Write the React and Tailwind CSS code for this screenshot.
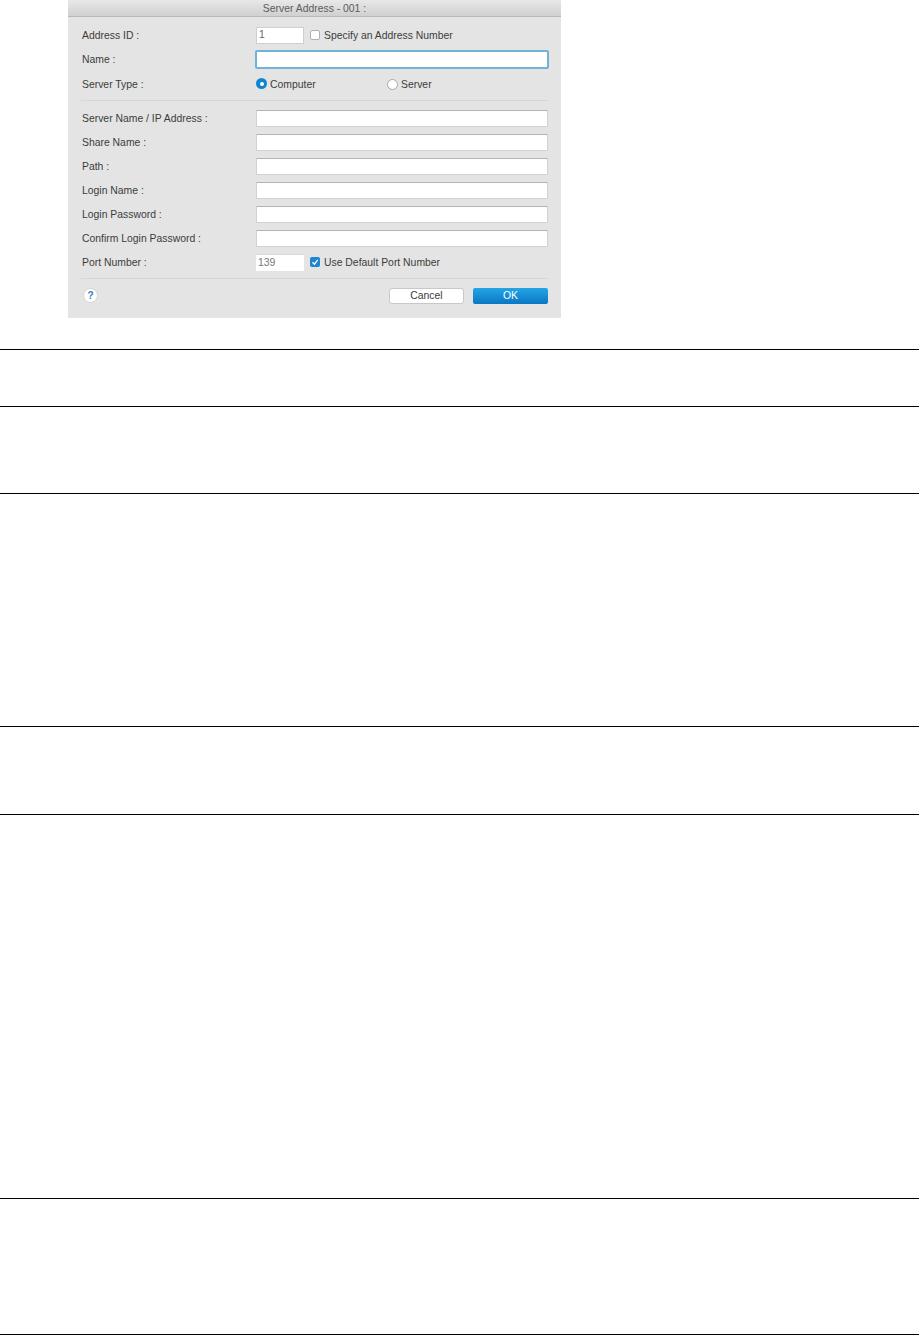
const field = 'h-[17px] bg-white border border-[#d2d2d2] border-t-[#b4b4b4] shrink-0';

function Row({ label, children, className = '' }) {
  return (
    <div className={`flex items-center h-[24px] ${className}`}>
      <div className="w-[188px] pl-[14px] pt-[1px] shrink-0">{label}</div>
      {children}
    </div>
  );
}

function CheckIcon() {
  return (
    <svg viewBox="0 0 10 10" className="w-[10px] h-[10px]">
      <path d="M2.5 5.2 L4.4 7.2 L7.8 2.8" fill="none" stroke="white" strokeWidth="1.3" />
    </svg>
  );
}

function Dialog() {
  return (
    <div className="ml-[68px] w-[493px] h-[318px] bg-[#e4e4e4] text-[10.4px] text-[#3c3c3c] font-['Liberation_Sans',sans-serif]">
      {/* Title bar */}
      <div className="h-[17px] pt-[2px] flex items-center justify-center border-b border-[#b8b8b8] bg-gradient-to-b from-[#e8e8e8] to-[#d0d0d0] text-[#5c5c5c]">
        Server Address - 001 :
      </div>

      <div className="pt-[6px]">
        <Row label="Address ID :">
          <div className="w-[48px] h-[17px] bg-white border border-[#cfcfcf] pl-[2px] flex items-center text-[#666] shrink-0">1</div>
          <div className="ml-[6px] w-[10px] h-[10px] rounded-[2px] bg-white border border-[#b0b0b0]" />
          <span className="ml-[4px] pt-[1px]">Specify an Address Number</span>
        </Row>
        <Row label="Name :" className="h-[25px]">
          <div className="-ml-[1px] w-[294px] h-[19px] bg-white border-2 border-[#6fb3d9] rounded-[2px]" />
        </Row>
        <Row label="Server Type :">
          <div className="w-[131px] flex items-center">
            <div className="w-[11px] h-[11px] rounded-full bg-[#0f86d2] flex items-center justify-center">
              <div className="w-[4px] h-[4px] rounded-full bg-white" />
            </div>
            <span className="ml-[3px] pt-[1px]">Computer</span>
          </div>
          <div className="w-[11px] h-[11px] rounded-full bg-white border border-[#a8a8a8]" />
          <span className="ml-[3px] pt-[1px]">Server</span>
        </Row>

        <div className="mx-[13px] mt-[4px] mb-[5px] border-t border-[#d6d6d6]" />

        {['Server Name / IP Address :', 'Share Name :', 'Path :', 'Login Name :', 'Login Password :', 'Confirm Login Password :'].map((label) => (
          <Row key={label} label={label}>
            <div className={`${field} w-[292px]`} />
          </Row>
        ))}
        <Row label="Port Number :">
          <div className="w-[48px] h-[17px] bg-white border-t border-[#dadada] pl-[2px] flex items-center text-[#777] shrink-0">139</div>
          <div className="ml-[6px] w-[10px] h-[10px] rounded-[2px] bg-[#1c86d1] flex items-center justify-center">
            <CheckIcon />
          </div>
          <span className="ml-[4px] pt-[1px]">Use Default Port Number</span>
        </Row>

        <div className="mx-[13px] mt-[4px] border-t border-[#d6d6d6]" />

        <div className="flex items-center h-[33px] pl-[15px] pr-[13px]">
          <div className="w-[15px] h-[15px] rounded-full bg-white border border-[#d4d4d4] flex items-center justify-center text-[#2a7fc0] font-bold text-[10px]">?</div>
          <div className="ml-auto w-[75px] h-[16px] bg-white border border-[#c8c8c8] rounded-[3px] flex items-center justify-center">Cancel</div>
          <div className="ml-[9px] w-[75px] h-[16px] rounded-[2px] bg-gradient-to-b from-[#25a5e6] to-[#0a77c4] flex items-center justify-center text-white">OK</div>
        </div>
      </div>
    </div>
  );
}

export default function App() {
  return (
    <div className="w-[919px] h-[1335px] bg-white overflow-hidden">
      <Dialog />
      <div className="mt-[31px]">
        {[57, 87, 233, 88, 384, 136].map((h, i) => (
          <div key={i} className="border-t border-black" style={{ height: h }} />
        ))}
        <div className="border-t border-black" />
      </div>
    </div>
  );
}
